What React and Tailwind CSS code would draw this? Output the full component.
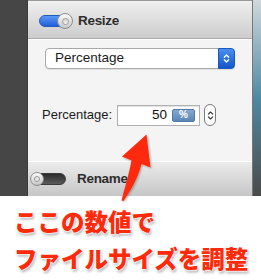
import React from "react";

function ToggleOn() {
  return (
    <div className="relative w-[34px] h-[16px]">
      <div className="absolute left-0 top-[2px] w-[32px] h-[12px] rounded-full bg-gradient-to-b from-[#5b98f7] to-[#1f5fd9] border border-[#2458b8]" />
      <div className="absolute left-[18px] top-0 w-[16px] h-[16px] rounded-full bg-gradient-to-b from-[#fbfbfb] to-[#c9c9c9] border border-[#8d8d8d] flex items-center justify-center">
        <div className="w-[7px] h-[7px] rounded-full border border-[#9a9a9a] bg-gradient-to-b from-[#d5d5d5] to-[#f4f4f4]" />
      </div>
    </div>
  );
}

function ToggleOff() {
  return (
    <div className="relative w-[36px] h-[14px]">
      <div className="absolute left-[2px] top-[1px] w-[34px] h-[12px] rounded-full bg-gradient-to-b from-[#2b2b2b] to-[#5c5c5c] border border-[#3a3a3a]" />
      <div className="absolute left-0 top-0 w-[14px] h-[14px] rounded-full bg-gradient-to-b from-[#fbfbfb] to-[#c6c6c6] border border-[#8d8d8d] flex items-center justify-center">
        <div className="w-[6px] h-[6px] rounded-full border border-[#9a9a9a] bg-[#e6e6e6]" />
      </div>
    </div>
  );
}

function Chevrons({ color, w = 8, h = 12, sw = 1.4 }) {
  return (
    <svg width={w} height={h} viewBox="0 0 8 12" fill="none" stroke={color} strokeWidth={sw} strokeLinecap="round" strokeLinejoin="round">
      <path d="M1.5 4.5 L4 2 L6.5 4.5" />
      <path d="M1.5 7.5 L4 10 L6.5 7.5" />
    </svg>
  );
}

export default function App() {
  const sans = { fontFamily: '"Liberation Sans", Arial, sans-serif' };
  return (
    <div className="relative w-[261px] h-[280px] bg-white overflow-hidden" style={sans}>
      <div className="flex h-[196px]">
        <div className="w-[28px] bg-[#464646] border-r border-[#3a3a3a]" />
        <div className="w-[224px] flex flex-col">
          <div className="h-[39px] bg-gradient-to-b from-[#efefef] to-[#cdcdcd] border-t border-[#9a9a9a] border-b border-b-[#a8a8a8] flex items-center pl-[11px] pt-[3px] gap-[4px]">
            <ToggleOn />
            <span className="text-[13.5px] font-bold text-[#2e2e2e] tracking-[-0.3px] ml-[1px]">Resize</span>
          </div>
          <div className="h-[122px] bg-[#f4f4f4] border-t border-white pt-[8px]">
            <div className="ml-[17px] w-[190px] h-[21px] flex rounded-[4px] border border-[#a9a9a9] bg-white shadow-[0_1px_0_rgba(0,0,0,0.08)]">
              <div className="flex-1 flex items-center pl-[9px] text-[13.5px] text-[#1a1a1a]">Percentage</div>
              <div className="w-[17px] -my-px -mr-px rounded-r-[4px] bg-gradient-to-b from-[#4b8ff0] to-[#0f56c9] border border-[#1a58c0] flex items-center justify-center">
                <Chevrons color="#ffffff" w={7} h={11} sw={1.5} />
              </div>
            </div>
            <div className="flex items-center mt-[35px] ml-[14px]">
              <span className="text-[13px] text-[#1a1a1a] w-[75px]">Percentage:</span>
              <div className="w-[83px] h-[21px] border border-[#b0b0b0] bg-white shadow-[inset_0_1px_1px_rgba(0,0,0,0.12)] flex items-center justify-end pr-[4px] gap-[5px]">
                <span className="text-[13.5px] text-[#111]">50</span>
                <div className="w-[23px] h-[13px] rounded-[2px] bg-gradient-to-b from-[#86a9cf] to-[#5a86b5] border border-[#5079a8] flex items-center justify-center text-[10px] font-bold text-white leading-none">%</div>
              </div>
              <div className="ml-[4px] w-[12px] h-[22px] rounded-full border border-[#7a7a7a] bg-white flex items-center justify-center">
                <Chevrons color="#333" w={7} h={15} sw={1.3} />
              </div>
            </div>
          </div>
          <div className="h-[35px] bg-gradient-to-b from-[#ececec] to-[#c6c6c6] border-t border-white flex items-center pl-[2px] gap-[11px]">
            <ToggleOff />
            <span className="text-[13.5px] font-bold text-[#2e2e2e] tracking-[-0.3px]">Rename</span>
          </div>
        </div>
        <div className="w-[9px] bg-gradient-to-b from-[#d0d8dc] via-[#4d8aa3] to-[#4a4a4a] border-l border-[#777]" />
      </div>
      <div
        className="pt-[7px] pl-[14px] text-[23.5px] font-black leading-[37px] text-[#ff2a0a] [text-shadow:0_0_2px_#fff,0_0_2px_#fff,0_0_3px_#fff,0_0_3px_#fff,1px_2px_3px_rgba(0,0,0,0.45)]"
        style={{ fontFamily: '"Noto Sans CJK JP", "Noto Sans", sans-serif' }}
      >
        <div>ここの数値で</div>
        <div className="whitespace-nowrap">ファイルサイズを調整</div>
      </div>
      <svg className="absolute left-0 top-0" width="261" height="280" viewBox="0 0 261 280">
        <defs>
          <filter id="sh" x="-20%" y="-20%" width="140%" height="140%">
            <feDropShadow dx="1" dy="1" stdDeviation="1" floodColor="#000" floodOpacity="0.3" />
          </filter>
        </defs>
        <path
          d="M146.5 134.5 L150.5 167.5 L141.5 164 C138 178 131 190 123.5 201 L121.5 200.5 C124.5 188 129 175 131.5 160.5 L122 156.5 Z"
          fill="#ff2a0a"
          filter="url(#sh)"
        />
      </svg>
    </div>
  );
}
